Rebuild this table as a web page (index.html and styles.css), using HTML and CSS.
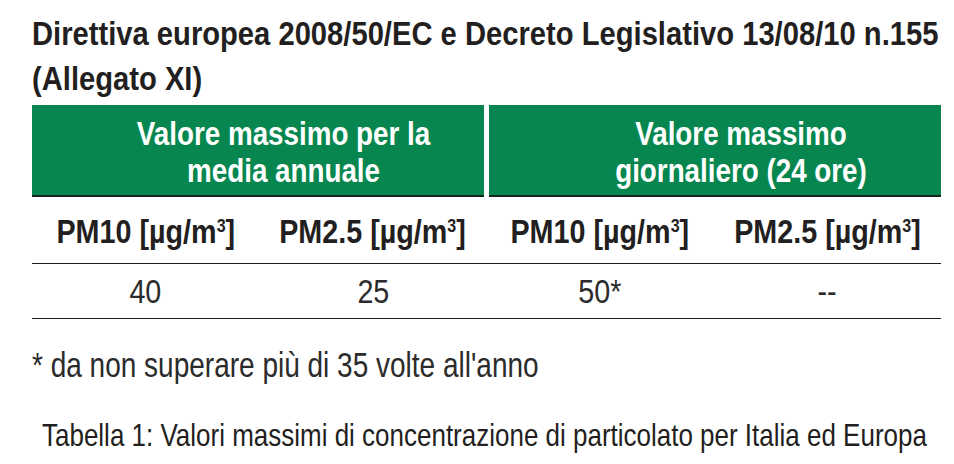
FILE: index.html
```html
<!DOCTYPE html>
<html lang="it">
<head>
<meta charset="utf-8">
<link rel="stylesheet" href="styles.css">
</head>
<body>
<div class="page">
  <h1 class="title">
    <span class="line">Direttiva europea 2008/50/EC e Decreto Legislativo 13/08/10 n.155</span>
    <span class="line">(Allegato XI)</span>
  </h1>
  <div class="groups">
    <div class="group"><span class="sq">Valore massimo per la<br>media annuale</span></div>
    <div class="group"><span class="sq">Valore massimo<br>giornaliero (24 ore)</span></div>
  </div>
  <div class="row head">
    <div class="cell"><span class="sq">PM10 [µg/m<sup>3</sup>]</span></div>
    <div class="cell"><span class="sq">PM2.5 [µg/m<sup>3</sup>]</span></div>
    <div class="cell"><span class="sq">PM10 [µg/m<sup>3</sup>]</span></div>
    <div class="cell"><span class="sq">PM2.5 [µg/m<sup>3</sup>]</span></div>
  </div>
  <div class="row data">
    <div class="cell"><span class="sq">40</span></div>
    <div class="cell"><span class="sq">25</span></div>
    <div class="cell"><span class="sq">50*</span></div>
    <div class="cell"><span class="sq">--</span></div>
  </div>
  <p class="note"><span class="sq">* da non superare più di 35 volte all'anno</span></p>
  <p class="caption"><span class="sq">Tabella 1: Valori massimi di concentrazione di particolato per Italia ed Europa</span></p>
</div>
</body>
</html>
```
FILE: styles.css
```css
html, body {
  margin: 0;
  padding: 0;
  background: #fff;
  overflow: hidden;
}
.page {
  width: 909px;
  margin-left: 32px;
  overflow: hidden;
  font-family: "Liberation Sans", Arial, sans-serif;
  color: #231f20;
}
.sq {
  display: inline-block;
  white-space: nowrap;
  transform-origin: left center;
}
.title {
  margin: 0;
  padding-top: 11px;
  height: 105px;
  box-sizing: border-box;
  font-size: 33px;
  line-height: 45px;
  font-weight: bold;
}
.title .line {
  display: block;
  white-space: nowrap;
  transform: scaleX(0.884);
  transform-origin: left center;
}
.groups {
  display: grid;
  grid-template-columns: 1fr 1fr;
  column-gap: 5px;
}
.group {
  display: flex;
  justify-content: center;
  background: #07874f;
  color: #fff;
  text-align: center;
  font-size: 34px;
  line-height: 36.5px;
  font-weight: bold;
  height: 92px;
  padding: 10px 0 0 52px;
  box-sizing: border-box;
  border-bottom: 2px solid #18251d;
}
.group .sq {
  transform: scaleX(0.817);
  transform-origin: center;
}
.row {
  display: grid;
  grid-template-columns: repeat(4, 1fr);
  border-bottom: 1px solid #1e1e1e;
  box-sizing: border-box;
}
.cell {
  display: flex;
  justify-content: center;
}
.cell .sq {
  transform-origin: center;
}
.head {
  height: 67px;
  padding-top: 14px;
  font-size: 34px;
  line-height: 40px;
  font-weight: bold;
}
.head .sq {
  transform: scaleX(0.845);
}
.head sup {
  font-size: 19px;
  vertical-align: 11px;
  line-height: 0;
}
.data {
  height: 55px;
  padding-top: 8px;
  font-size: 33px;
  line-height: 40px;
  color: #2b2b2b;
}
.data .sq {
  transform: scaleX(0.87);
}
.note {
  margin: 26px 0 0;
  font-size: 35px;
  line-height: 40px;
  color: #2b2b2b;
}
.note .sq {
  transform: scaleX(0.80);
}
.caption {
  margin: 30px 0 0;
  padding-left: 10px;
  font-size: 32px;
  line-height: 40px;
}
.caption .sq {
  transform: scaleX(0.812);
}
```
